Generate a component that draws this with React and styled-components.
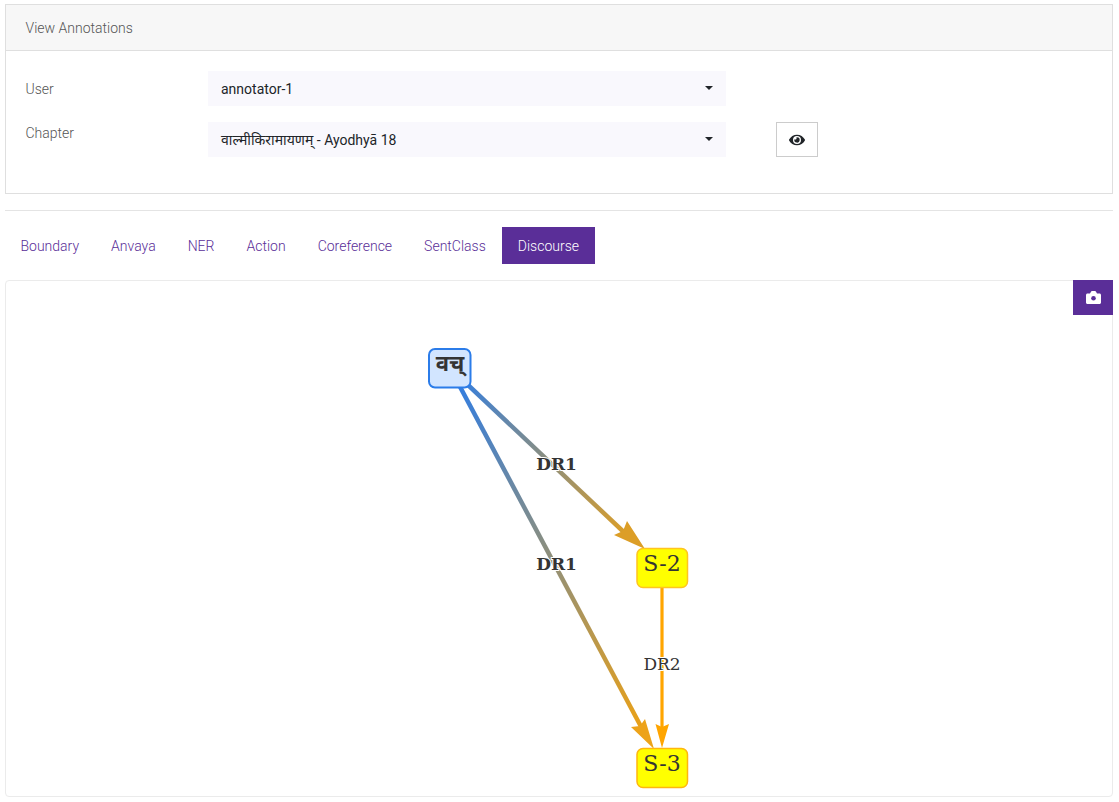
import React from "react";
import styled, { createGlobalStyle } from "styled-components";
import { FaEye } from "react-icons/fa";

const purple = "#5a2e98";

const GlobalStyle = createGlobalStyle`
    html, body {
        margin: 0;
        background: #fff;
        font-family: Roboto, "Noto Sans", sans-serif;
        font-size: 14px;
    }
`;

const tabs = ["Boundary", "Anvaya", "NER", "Action", "Coreference", "SentClass", "Discourse"];

export default function App() {
    return (
        <Page>
            <GlobalStyle />
            <Card>
                <CardHeader>View Annotations</CardHeader>
                <CardBody>
                    <FormRow>
                        <Label>User</Label>
                        <Select>annotator-1</Select>
                    </FormRow>
                    <FormRow $top>
                        <Label $top>Chapter</Label>
                        <Select>वाल्मीकिरामायणम् - Ayodhyā 18</Select>
                        <ViewButton>
                            <FaEye size={16} />
                        </ViewButton>
                    </FormRow>
                </CardBody>
            </Card>
            <Rule />
            <Nav>
                {tabs.map((t) => (
                    <Tab key={t} $active={t === "Discourse"}>
                        {t}
                    </Tab>
                ))}
            </Nav>
            <GraphPanel>
                <CameraButton>
                    <svg width="15" height="13" viewBox="0 0 15 13">
                        <path
                            d="M1.5 2.5H4L5 .7C5.2.3 5.5 0 6 0h3c.5 0 .8.3 1 .7l1 1.8h2.5c.8 0 1.5.7 1.5 1.5v7.5c0 .8-.7 1.5-1.5 1.5h-12C.7 13 0 12.3 0 11.5V4c0-.8.7-1.5 1.5-1.5z"
                            fill="#fff"
                        />
                        <circle cx="7.5" cy="7.2" r="2.3" fill={purple} />
                    </svg>
                </CameraButton>
                <Graph />
            </GraphPanel>
        </Page>
    );
}

// panel-local coords: page x - 6, page y - 281
function Graph() {
    return (
        <GraphSvg viewBox="0 0 1106 515" width="1106" height="515">
            <defs>
                <linearGradient id="edgeA" gradientUnits="userSpaceOnUse" x1="444" y1="87" x2="656" y2="287">
                    <stop offset="0" stopColor="#2b7ce9" />
                    <stop offset="1" stopColor="#ffa500" />
                </linearGradient>
                <linearGradient id="edgeB" gradientUnits="userSpaceOnUse" x1="444" y1="87" x2="656" y2="487">
                    <stop offset="0" stopColor="#2b7ce9" />
                    <stop offset="1" stopColor="#ffa500" />
                </linearGradient>
            </defs>

            <line x1="444" y1="87" x2="622" y2="255" stroke="url(#edgeA)" strokeWidth="4.5" />
            <polygon points="639,268 608,254 617,250 621,240" fill="#dc9e27" />
            <line x1="444" y1="87" x2="640" y2="455" stroke="url(#edgeB)" strokeWidth="4.5" />
            <polygon points="648,468 625,446 634,445 639,438" fill="#eda31a" />
            <line x1="656" y1="307" x2="656" y2="450" stroke="#ffa500" strokeWidth="3.2" />
            <polygon points="656,467 649.5,443 656,446 663,443" fill="#ffa500" />

            <EdgeLabel x="550.5" y="189" $bold>DR1</EdgeLabel>
            <EdgeLabel x="550.5" y="289" $bold>DR1</EdgeLabel>
            <EdgeLabel x="656" y="389">DR2</EdgeLabel>

            <rect x="423" y="68" width="41.5" height="38.5" rx="6" fill="#d2e5ff" stroke="#2b7ce9" strokeWidth="2" />
            <NodeText x="444" y="90" $sanskrit>वच्</NodeText>

            <rect x="631" y="267.5" width="50.5" height="39" rx="6" fill="#ffff00" stroke="#ffc41f" strokeWidth="1.5" />
            <NodeText x="656" y="290">S-2</NodeText>

            <rect x="631" y="467.5" width="50.5" height="39" rx="6" fill="#ffff00" stroke="#ffb60d" strokeWidth="1.5" />
            <NodeText x="656" y="490">S-3</NodeText>
        </GraphSvg>
    );
}

const Page = styled.div`
    padding: 4px 6px 5px 5px;
`;

const Card = styled.div`
    border: 1px solid #dfdfdf;
    height: 188px;
`;

const CardHeader = styled.div`
    height: 45px;
    line-height: 46px;
    padding-left: 19.5px;
    background: #f7f7f7;
    border-bottom: 1px solid #dfdfdf;
    color: #555;
    font-weight: 300;
`;

const CardBody = styled.div`
    padding: 20px 20px 0 19.5px;
    display: flex;
    flex-direction: column;
    gap: 16px;
`;

const FormRow = styled.div`
    display: flex;
    align-items: ${(p) => (p.$top ? "flex-start" : "center")};
`;

const Label = styled.div`
    width: 182.5px;
    color: #555;
    font-weight: 300;
    line-height: 21px;
    padding-top: ${(p) => (p.$top ? "1px" : "2px")};
`;

const Select = styled.div`
    position: relative;
    box-sizing: border-box;
    width: 518px;
    height: 35px;
    line-height: 36px;
    padding-left: 13px;
    background: #f9f8fd;
    color: #212529;
    font-family: Roboto, "Noto Sans", "Noto Sans Devanagari", sans-serif;
    &::after {
        content: "";
        position: absolute;
        right: 13px;
        top: 15px;
        border-top: 4px solid #212529;
        border-left: 4px solid transparent;
        border-right: 4px solid transparent;
    }
`;

const ViewButton = styled.button`
    box-sizing: border-box;
    width: 42px;
    height: 35px;
    margin-left: 50px;
    padding: 0;
    display: flex;
    align-items: center;
    justify-content: center;
    background: #fff;
    border: 1px solid #ccc;
    color: #212529;
`;

const Rule = styled.hr`
    margin: 16px 0;
    border: 0;
    border-top: 1px solid #e4e4e4;
`;

const Nav = styled.div`
    display: flex;
    margin-left: -0.5px;
`;

const Tab = styled.div`
    padding: 9px 16px 7px;
    line-height: 21px;
    font-weight: 300;
    color: ${(p) => (p.$active ? "#fff" : purple)};
    background: ${(p) => (p.$active ? purple : "transparent")};
`;

const GraphPanel = styled.div`
    position: relative;
    margin-top: 16px;
    height: 515px;
    border: 1px solid #ebebeb;
    border-radius: 4px;
`;

const CameraButton = styled.div`
    position: absolute;
    top: -1px;
    right: -1px;
    width: 40px;
    height: 35px;
    display: flex;
    align-items: center;
    justify-content: center;
    background: ${purple};
`;

const GraphSvg = styled.svg`
    display: block;
`;

const EdgeLabel = styled.text`
    font-family: "DejaVu Serif", serif;
    font-size: 17px;
    font-weight: ${(p) => (p.$bold ? 700 : 400)};
    fill: #343434;
    text-anchor: middle;
    paint-order: stroke;
    stroke: #fff;
    stroke-width: 2px;
`;

const NodeText = styled.text`
    font-family: ${(p) => (p.$sanskrit ? '"Noto Sans", "Noto Sans Devanagari", sans-serif' : '"DejaVu Serif", serif')};
    font-size: 22px;
    font-weight: ${(p) => (p.$sanskrit ? 700 : 400)};
    fill: #343434;
    text-anchor: middle;
`;
